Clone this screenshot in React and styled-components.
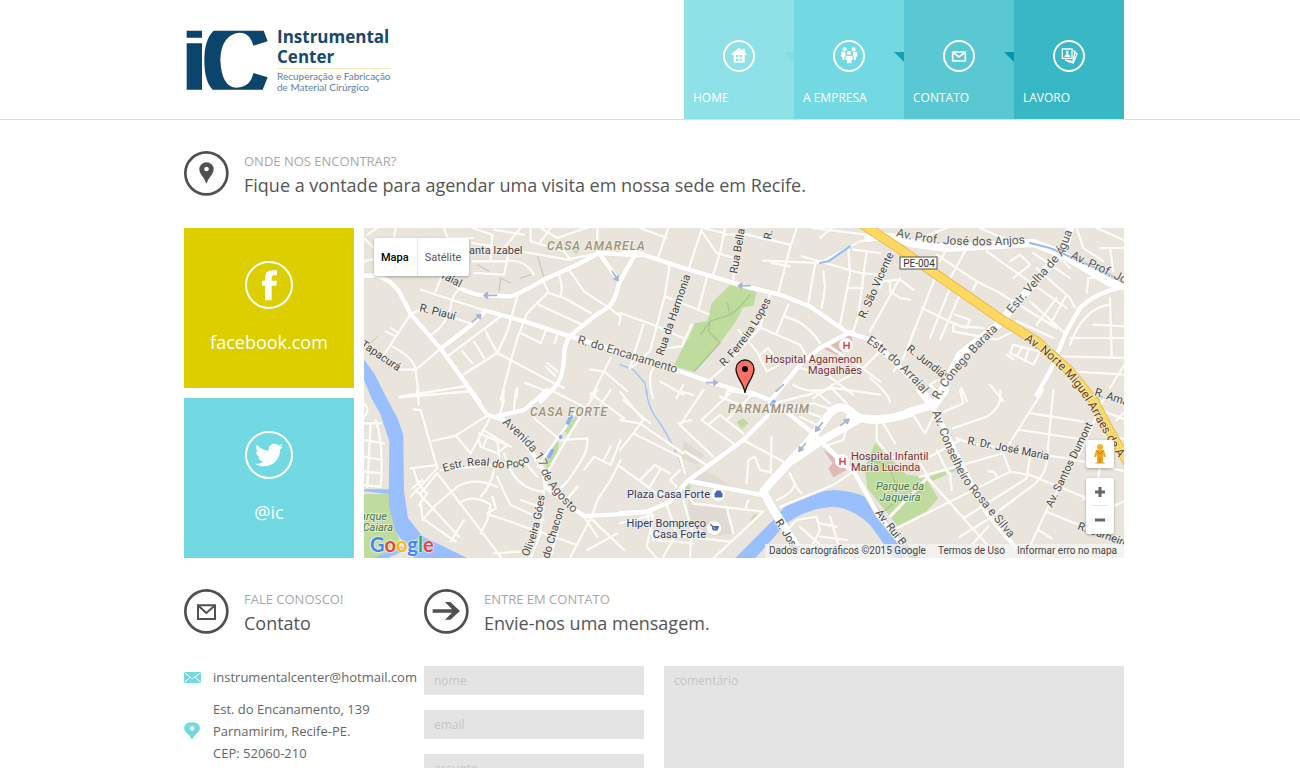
import React from 'react';
import styled, { createGlobalStyle } from 'styled-components';
import { FaTwitter } from 'react-icons/fa';

const GlobalStyle = createGlobalStyle`
  * {
    box-sizing: border-box;
  }
  body {
    margin: 0;
    background: #fff;
    color: #666;
    font-family: "Open Sans", sans-serif;
    font-size: 13px;
  }
  a {
    color: inherit;
    text-decoration: none;
  }
  h2, p {
    margin: 0;
    font-weight: 400;
  }
`;

const navItems = [
  { label: 'HOME', icon: 'home', color: '#8fe1e8', arrow: '#72d9e2' },
  { label: 'A EMPRESA', icon: 'people', color: '#72d9e2', arrow: '#13a1af' },
  { label: 'CONTATO', icon: 'mail', color: '#59c8d2', arrow: '#0796a5' },
  { label: 'LAVORO', icon: 'photos', color: '#38b7c4' },
];

// The map is drawn in six tiles, three units to a pixel.
// x and y are the corner of each tile.
const tiles = [
  {
    x: 0,
    y: 0,
    major: [
      'M-5 143 L40 143 Q80 155 105 190 L140 258 L230 362 L345 520',
      'M250 150 Q300 203 380 203 L440 205 Q470 195 540 155 L640 110 L705 75 L830 82',
      'M705 75 L765 160',
      'M815 75 L765 165 Q755 220 730 240 L690 265 L617 325 Q600 350 600 390 Q598 450 570 480 L530 520',
      'M230 362 L330 285 L365 248 L480 280 L617 325 L780 375 L940 430',
    ],
    minor: [
      'M700 0 V75',
      'M170 185 L365 248',
      'M140 258 L60 380 M65 310 L95 325 M80 300 L100 313',
      'M85 355 Q150 390 155 425 L165 510 M105 425 H155 L230 362',
      'M145 255 L185 240 M270 270 L315 285',
      'M290 180 Q262 200 260 240 Q240 300 200 320 M215 190 L235 140',
      'M110 505 L300 475 M460 205 L430 310 L400 375 L300 438 M410 265 L250 385',
      'M295 370 L325 405 M330 340 L360 390 M365 310 L400 375 L560 460 L600 480',
      'M550 195 L490 255 L460 330 L435 420 L410 515',
      'M525 230 L655 290 M535 155 L555 195 L600 210 L680 255',
      'M585 140 Q598 180 590 205 M615 125 L660 190 L735 240 L770 265 L765 290',
      'M470 315 L530 345 L545 310 M580 320 L572 345 M550 405 L580 430 M545 415 L575 445',
      'M485 465 L560 495 M460 480 L458 510',
      'M680 425 L720 430 L790 490 M740 390 L680 510',
      'M0 30 L30 60 M10 20 L40 0 M95 0 L90 30 M0 100 L40 90',
      'M325 0 L385 20 L380 95 M325 45 L385 55 M435 70 L420 140 L330 135',
      'M325 100 L420 100 Q480 90 510 140 M470 0 L420 60',
      'M500 0 V40 L600 70 L620 95 M380 60 L470 70 L610 95 L705 75',
      'M530 0 L580 30 L680 -5 M530 40 L560 0 M240 0 L250 30 L325 30 M390 5 L480 20',
    ],
  },
  {
    x: 768,
    y: 0,
    major: [
      'M0 62 L55 75 L190 120 L365 172 L480 200 L570 235 L680 312 L780 345',
      'M165 425 L280 465 L400 500',
      'M690 312 L600 360 L540 410 L450 520',
    ],
    minor: [
      'M145 0 L115 85 M140 30 L60 0 M245 5 L205 125 M245 10 L290 75 L345 90',
      'M315 0 L300 75 L280 140 M315 20 H390 M250 0 L310 15 M345 90 L340 155',
      'M150 105 L135 200 L90 370 L40 415 M135 205 L265 258 M260 150 L235 245',
      'M0 255 L100 290 L190 330 M215 290 L185 355 L145 360 M70 290 L30 420',
      'M100 420 Q80 450 100 510 M120 460 L190 500 M190 470 L170 510 M325 480 L315 510',
      'M380 20 L510 50 M530 0 L510 60 L475 195 M430 98 L600 105 L720 40 L780 30',
      'M455 105 L510 115 M545 85 L720 135 L780 140 M585 110 L565 225',
      'M610 130 L615 180 L605 240 M575 0 L780 25 M635 0 L600 30',
      'M685 60 L690 140 L680 190 L660 290 M740 70 L715 260 L700 310 M700 65 L780 75 M685 180 H730',
      'M505 230 L470 315 M490 265 Q560 280 600 345 M450 200 L420 300 L310 420 L270 455',
      'M400 290 L540 350 L560 385 M355 305 L410 370 L440 430 L500 400 M420 380 L445 360 L470 400',
      'M520 470 Q560 500 640 480 L780 500 M580 510 L640 470 L730 420 L780 370',
      'M620 350 L740 430 L780 460 M540 420 L620 440 L700 500',
    ],
  },
  {
    x: 1518,
    y: 0,
    major: [
      'M0 345 L60 390 L170 500',
      'M770 175 Q680 190 630 240 L590 310 L540 430 L500 500',
    ],
    wide: [
      'M-5 30 Q60 15 120 45 L230 60 L490 45 L570 75 L720 165 L770 175',
      'M600 0 L585 60 L410 260 L385 290 L270 380 L235 450 L200 520',
    ],
    minor: [
      'M70 70 L45 130 L30 180 M40 160 L90 155 L130 185 M60 160 V190 L90 210 L120 215',
      'M195 150 L100 390 L70 430 M240 180 L180 330 M0 310 L90 150 M155 240 L270 295 L340 300 M270 200 L210 335',
      'M255 260 L300 275 L290 300 L250 285 V310 L380 335 L430 310',
      'M290 60 L230 170 M200 80 L320 160 L310 185 M350 70 L590 240 M320 160 L400 200 M230 60 L210 100',
      'M500 120 L600 210 L615 240 M440 280 L550 330 M480 220 L590 320 M380 190 L560 300 M590 200 L540 290',
      'M560 210 L500 290 M490 75 L540 110 L600 150 M420 100 L450 80 L480 110 L430 150 M150 30 L230 0 M330 0 L420 40',
      'M560 80 L600 120 M620 0 L640 60 L700 100 M650 195 L655 150 L690 150 M720 60 L730 130 M680 0 L770 40 M690 60 H770',
      'M720 210 L725 385 M670 290 L765 295 M600 350 Q640 240 720 230',
      'M600 330 H770 M570 385 L770 390 M600 430 L770 440 M770 400 L720 480',
      'M430 350 L420 375 L490 410 L510 370 Z M455 360 L440 385 M475 365 L465 400 M410 380 L430 395',
      'M0 450 Q50 490 60 520 M180 470 L205 455 L225 475 L205 495 Z M360 470 L400 520 M275 480 L290 520 M20 340 L80 400',
    ],
  },
  {
    x: 0,
    y: 486,
    major: [
      'M310 -10 L370 75 L420 90 L500 180 L540 245 L545 290 L620 350 L660 378 L780 372 L860 365',
      'M400 78 L480 60 L550 0',
    ],
    minor: [
      'M105 22 L310 5 M160 0 L165 45 M150 58 L170 60 L220 235 L140 320 M205 153 L275 137 L365 80',
      'M275 137 L320 190 M375 90 L320 190 M230 240 L480 215',
      'M345 130 L430 165 L400 190 L350 170 L345 150 M360 165 L370 140 M400 150 L405 200 M360 122 L440 170',
      'M420 30 L405 80 M455 0 L450 60 M420 0 L415 40 M510 85 L590 150 M560 0 L660 50 M680 10 L780 85 M700 60 L740 0',
      'M640 60 L520 230 M700 0 L600 160 L555 240 M590 150 L670 145 Q675 180 640 230 Q600 300 560 310',
      'M770 150 L740 225 L690 200 L660 240 M740 170 L720 210 M770 210 L740 270 L700 330 L685 375',
      'M140 235 L220 225 M150 240 Q160 290 190 310 M145 295 L175 270 M170 310 L215 255',
      'M155 300 L285 440 M220 250 L410 500 M165 345 L190 310 M175 390 L215 345 L280 290 Q330 260 400 290',
      'M285 340 Q330 310 380 345 L370 390 L350 430 M300 390 L260 455 M170 335 L175 385 L275 455',
      'M400 260 Q430 330 440 345 L540 390 M390 240 Q380 290 350 320 M385 320 L395 355 L370 370',
      'M380 375 L640 465 M470 330 L540 355 M420 190 Q450 300 540 305 M480 215 L520 260',
      'M390 490 L470 485 M640 290 L600 340 M680 385 L780 480 M680 385 L620 500 M660 380 L700 440',
      'M590 390 L560 500 M540 300 L530 430 L500 505 M670 480 L760 430',
      'M0 100 H50 M35 90 Q60 160 50 290 M0 150 L60 160 M0 200 L55 210 M0 245 L55 250 M0 285 L45 290 M20 100 L10 290 M0 40 Q20 60 0 80',
    ],
  },
  {
    x: 768,
    y: 486,
    major: [
      'M330 0 L400 10 L460 35 L580 130 L665 215 L705 250 L775 375 L860 480',
      'M460 30 L440 80 L370 150 L200 275 L150 335 L80 365 L0 370',
      'M215 275 L425 315',
    ],
    wide: [
      'M870 70 Q740 110 700 70 Q660 35 630 70 L560 160 L450 280 L430 305 L460 360 L550 500',
      'M720 85 L600 155 L520 210',
    ],
    minor: [
      'M0 5 L70 90 L40 130 M0 90 L60 100 L190 190 M40 130 L180 200 L195 250',
      'M0 180 L40 130 M10 30 L90 100 M0 230 L110 310 L160 320 M60 270 L105 225 L150 250 M90 290 L120 240',
      'M170 290 L150 270 L180 240 M250 0 L180 105 L280 200 M185 5 L220 15 M330 10 L245 90 L340 160',
      'M270 100 L300 75 L370 130 M300 20 L400 60 M390 20 L320 90 M215 90 L175 100 M195 185 L260 225',
      'M370 150 L490 215 M455 140 L452 250 M380 280 L385 210 L405 200 L420 240 L445 245',
      'M510 250 Q530 300 545 310 M470 330 Q520 310 525 280 L510 255 M480 350 L640 285 L700 245',
      'M195 300 L220 340 L430 365 M385 330 L375 360 M460 40 L580 10 M540 60 L600 80 M470 60 L580 40 L640 60',
      'M640 0 L680 40 M600 110 L540 80 M690 80 L670 150 L610 170 M580 0 L630 40',
      'M0 400 L100 375 L80 470 L110 505 M140 345 L170 430 L130 500 M190 330 L215 420 L210 505',
      'M80 365 L100 450 L220 460 M100 430 L330 455 M320 350 L340 430 M425 370 L280 505',
      'M490 430 L530 390 L590 380 L600 420 L560 500 M630 380 L660 480 M540 410 L640 500 M600 400 L650 410 M600 440 L680 450',
    ],
  },
  {
    x: 1518,
    y: 486,
    major: ['M190 50 L230 130 L290 250 L350 370 L460 500'],
    wide: ['M-60 80 Q60 100 120 65 L190 45', 'M150 0 L190 50 L225 0'],
    minor: [
      'M700 30 L640 170 L530 360 L470 490',
      'M20 100 V150 L60 200 L110 210 M40 100 L75 160 M130 75 L165 130 L190 80',
      'M390 0 Q400 50 350 80 L250 115 M270 0 L280 40 L200 75',
      'M520 0 L400 190 L150 260 M550 0 L540 110 L530 220 Q520 270 470 300 L350 390 L270 440',
      'M485 70 L640 95 M450 120 L650 150 M270 150 L180 200 M260 145 L300 160 L530 195 L640 215 L770 245',
      'M200 180 L235 250 M400 190 L420 245 L80 415 M420 245 L480 255 L640 320 L740 345',
      'M480 200 L470 265 L280 385 M165 255 L370 485 M380 260 Q375 240 355 245 M240 250 L245 300',
      'M150 220 L175 260 L60 380 M530 365 L650 415 L770 455 M545 445 L505 420 M355 410 L300 470',
      'M690 230 L680 290 L640 330 M740 90 L770 60 M640 0 L690 60 L770 90 M700 130 L770 150 M730 350 L770 330',
    ],
  },
];

const layer = (kind, width, color) =>
  tiles.map((tile) => (
    <g key={`${kind}${tile.x}-${tile.y}`} transform={`translate(${tile.x} ${tile.y})`}>
      {(tile[kind] || []).map((d) => (
        <path key={d} d={d} stroke={color} strokeWidth={width} />
      ))}
    </g>
  ));

const yellowRoad = 'M1500 -8 L1588 50 L1718 140 L1913 275 L2018 340 L2118 430 L2190 520 L2238 610 L2295 710';

// street names that follow the bend of their street
const curvedNames = [
  { id: 'anjos', d: 'M532 8 Q560 16 600 17 T664 15', text: 'Av. Prof. José dos Anjos' },
  { id: 'agua', d: 'M648 86 L700 26 L712 -6', text: 'Estr. Velha de Água' },
  { id: 'arraial', d: 'M502 114 Q535 136 564 172', text: 'Estr. do Arraial' },
  { id: 'conego', d: 'M575 172 Q588 145 638 98', text: 'R. Cônego Barata' },
  { id: 'norte', d: 'M660 112 Q706 143 728 184 T768 250', text: 'Av. Norte Miguel Arraes de A', tone: 'highway' },
  { id: 'rosa', d: 'M568 184 Q590 245 606 263 T656 324', text: 'Av. Conselheiro Rosa e Silva' },
  { id: 'agosto', d: 'M138 195 Q174 226 177 242 T216 292', text: 'Avenida 17 de Agosto' },
  { id: 'poco', d: 'M80 244 Q110 234 130 239 T166 233', text: 'Estr. Real do Poço', tone: 'dark' },
  { id: 'ferreira', d: 'M360 139 Q388 112 408 70', text: 'R. Ferreira Lopes', tone: 'dark' },
  { id: 'goes', d: 'M164 329 Q178 300 181 262', text: 'Oliveira Góes', tone: 'dark' },
];

const straightNames = [
  { x: 105, y: 26, turn: 0, text: 'anta Izabel' },
  { x: 77, y: 50, turn: 27, text: 'raial' },
  { x: 55, y: 83, turn: 14, text: 'R. Piauí' },
  { x: -4, y: 118, turn: 34, text: 'Tapacurá' },
  { x: 213, y: 115, turn: 17, text: 'R. do Encanamento', large: true },
  { x: 299, y: 128, turn: -71, text: 'Rua da Harmonia' },
  { x: 373, y: 46, turn: -80, text: 'Rua Bella' },
  { x: 407, y: 12, turn: -80, text: 'R.' },
  { x: 501, y: 91, turn: -66, text: 'R. São Vicente' },
  { x: 706, y: 30, turn: 25, text: 'Av. Prof. José', large: true },
  { x: 542, y: 122, turn: 38, text: 'R. Jundiá' },
  { x: 730, y: 167, turn: 18, text: 'R. Amaral' },
  { x: 603, y: 216, turn: 11, text: 'R. Dr. José Maria' },
  { x: 688, y: 280, turn: -64, text: 'Av. Santos Dumont' },
  { x: 713, y: 301, turn: 20, text: 'R. Carneiro' },
  { x: 511, y: 285, turn: 52, text: 'Av. Rui Barbosa' },
  { x: 411, y: 294, turn: 58, text: 'R. José' },
  { x: 185, y: 331, turn: -73, text: 'do Chacon' },
];

const placeNames = [
  { x: 183, y: 22, tone: 'district', text: 'CASA AMARELA' },
  { x: 166, y: 188, tone: 'district', text: 'CASA FORTE' },
  { x: 364, y: 185, tone: 'district', text: 'PARNAMIRIM' },
  { x: 498, y: 135, tone: 'hospital', anchor: 'end', text: 'Hospital Agamenon' },
  { x: 498, y: 146, tone: 'hospital', anchor: 'end', text: 'Magalhães' },
  { x: 487, y: 232, tone: 'hospital', text: 'Hospital Infantil' },
  { x: 487, y: 243, tone: 'hospital', text: 'Maria Lucinda' },
  { x: 536, y: 262, tone: 'park', anchor: 'middle', text: 'Parque da' },
  { x: 536, y: 273, tone: 'park', anchor: 'middle', text: 'Jaqueira' },
  { x: 23, y: 292, tone: 'park', anchor: 'end', text: 'Parque' },
  { x: 29, y: 303, tone: 'park', anchor: 'end', text: 'Caiara' },
  { x: 346, y: 270, tone: 'shop', anchor: 'end', text: 'Plaza Casa Forte' },
  { x: 342, y: 299, tone: 'shop', anchor: 'end', text: 'Hiper Bompreço' },
  { x: 342, y: 310, tone: 'shop', anchor: 'end', text: 'Casa Forte' },
];

const tones = {
  street: '#5a5a5a',
  dark: '#444',
  highway: '#6f4412',
  district: '#9c9279',
  hospital: '#7c3038',
  park: '#3d7b3a',
  shop: '#333a66',
};

function NavIcon({ name, color }) {
  return (
    <svg width="32" height="32" viewBox="0 0 96 96" fill="none" aria-hidden="true">
      <circle cx="48" cy="48" r="45" stroke="#fff" strokeWidth="6" />
      {name === 'home' &&
        <g>
          <path d="M48 23 L59 32 V26 H65 V37 L73 44 H65 V68 H32 V44 H23 Z" fill="#fff" />
          <path d="M39 45 h7 v7 h-7z M50 45 h7 v7 h-7z M39 56 h7 v7 h-7z M50 56 h7 v7 h-7z" fill={color} />
        </g>
      }
      {name === 'people' &&
        <g fill="#fff">
          <circle cx="35" cy="28" r="6" />
          <circle cx="62" cy="28" r="6" />
          <path d="M24 39 Q24 35 28 35 H37 V59 H28 V50 H24Z M73 39 Q73 35 69 35 H60 V59 H69 V50 H73Z" />
          <circle cx="48" cy="39" r="8" stroke={color} strokeWidth="3" />
          <path d="M36 51 Q36 46 41 46 H56 Q61 46 61 51 V61 H57 V71 H40 V61 H36Z" stroke={color} strokeWidth="3" />
        </g>
      }
      {name === 'mail' &&
        <path d="M29 36 H67 V63 H29 Z M31 38 L48 51 L65 38" stroke="#fff" strokeWidth="5" />
      }
      {name === 'photos' &&
        <g stroke="#fff" strokeWidth="3">
          <path d="M61 32 L66 34 L60 65 L36 60" strokeWidth="4" />
          <path d="M67 38 L72 41 L61 69 L43 64" strokeWidth="4" />
          <path d="M28 27 H57 V55 H28 Z" fill={color} strokeWidth="4" />
          <circle cx="43" cy="36" r="4" fill="#fff" stroke="none" />
          <path d="M34 51 Q35 44 40 44 L39 40 H47 L46 44 Q51 44 52 51Z" fill="#fff" stroke="none" />
        </g>
      }
    </svg>
  );
}

function HeadingIcon({ name }) {
  return (
    <svg width="45" height="45" viewBox="0 0 135 135" fill="none" aria-hidden="true">
      <circle cx="67" cy="67" r="63" stroke="#505050" strokeWidth="8" />
      {name === 'pin' &&
        <path fillRule="evenodd" fill="#505050" d="M67 98 Q61 82 51 70 Q46 63 46 55 A21 21 0 0 1 89 55 Q89 63 84 70 Q74 82 67 98Z M67 47 a7 7 0 1 0 1 0Z" />
      }
      {name === 'mail' &&
        <path d="M42 49 H93 V90 H42 Z M44 51 L67 72 L91 51" stroke="#505050" strokeWidth="6" />
      }
      {name === 'arrow' &&
        <path d="M63 39 H79 L108 66 L79 92 H63 L84 71 H26 V61 H84 Z" fill="#505050" />
      }
    </svg>
  );
}

function Heading({ icon, small, title }) {
  return (
    <HeadingRow>
      <HeadingIcon name={icon} />
      <div>
        <Kicker>{small}</Kicker>
        <Title>{title}</Title>
      </div>
    </HeadingRow>
  );
}

function StreetMap() {
  return (
    <MapDrawing viewBox="0 0 760 330" preserveAspectRatio="xMidYMid slice" role="img" aria-label="Mapa de Parnamirim, Recife">
      <rect width="760" height="330" fill="#e9e5dc" />
      <g transform="scale(0.33333)" fill="none" strokeLinecap="round" strokeLinejoin="round">
        <g fill="#dfdad2">
          <path d="M973 816 L1098 846 L1108 916 L1048 926 L973 880Z M1000 716 L1060 746 L1120 790 L990 756Z" />
          <path d="M960 640 L1020 680 L1000 710 L950 690Z" />
        </g>
        <g fill="#bfdc9e">
          <path d="M1098 170 L1178 190 L1168 235 L1138 238 L1113 285 L1068 345 L993 432 L928 415 L983 310 L993 285 L1030 280 L1043 225Z" />
          <path d="M0 798 H75 L90 886 L110 946 L40 990 H0Z" />
          <path d="M1533 645 L1628 740 L1683 746 L1723 811 L1678 861 L1603 896 L1570 856 L1510 780 L1502 720Z" />
          <path d="M1693 748 L1783 711 L1793 721 L1703 760Z M2178 496 L2208 506 L2198 531Z" />
          <path d="M1118 581 L1138 571 L1153 586 L1133 604Z M1168 861 L1193 858 L1173 884 L1158 881Z M960 775 L980 770 L975 810Z" />
          <path d="M595 600 L618 560 L640 568 L612 622Z M540 710 L556 660 L585 640 L578 690 L552 722Z M625 70 L645 62 L640 78Z" />
        </g>
        <path d="M1378 345 L1458 308 L1466 340 L1420 382 L1378 362Z M1378 666 L1418 691 L1448 726 L1408 748 L1393 721 L1406 706Z" fill="#e2b8b4" />
        <path d="M0 395 L30 435 L68 510 L100 570 L118 620 L120 790 L132 870 L175 925 L310 990 H150 L95 910 L74 830 L76 640 L50 560 L22 510 L0 455Z" fill="#99bfff" />
        <path d="M0 784 L75 784 L75 798 L0 790Z M30 990 L110 955 L130 965 L70 990Z" fill="#99bfff" />
        <path d="M1113 991 L1228 876 L1268 831 Q1338 790 1408 786 Q1488 790 1530 822 L1560 865 L1600 925 L1625 991 H1590 L1558 946 L1518 890 Q1460 838 1408 836 Q1328 841 1268 886 L1173 991Z" fill="#99bfff" />
        <g stroke="#9dc1fb" strokeWidth="4">
          <path d="M848 486 Q848 536 888 586 Q928 646 960 730 M768 410 L808 425 L843 465 L848 500" />
        </g>
        <g stroke="#a9c68c" strokeWidth="4">
          <path d="M1158 200 Q1120 250 1098 260 L1038 280 L1033 310 L1068 345 L990 430 M1090 225 L1098 260 M1038 280 L1010 320" />
          <path d="M1520 700 Q1580 700 1590 760 Q1640 780 1670 820 M1560 850 Q1600 810 1670 790" />
        </g>
        <g stroke="#c3bfb6" strokeWidth="3">
          <path d="M405 190 L410 150 L440 165 M470 150 L500 140 M520 80 L540 150 M340 110 L375 130 M15 350 L40 325" />
        </g>
        {layer('minor', 11, '#e1ddd3')}
        {layer('major', 17, '#dfdbd1')}
        {layer('wide', 28, '#dfdbd1')}
        {layer('minor', 8, '#fbfaf7')}
        {layer('major', 14, '#fff')}
        {layer('wide', 25, '#fff')}
        <path d={yellowRoad} stroke="#e9bd4e" strokeWidth="30" />
        <path d={yellowRoad} stroke="#ffd95f" strokeWidth="24" />
        <path d="M1998 45 L2058 60 L2218 130 L2288 168 M1368 105 L1393 100 L1458 55" stroke="#94bafa" strokeWidth="6" />
        <path d="M612 585 L622 566 M555 686 L565 668 M590 626 V628 M1223 530 L1230 520" stroke="#86b0f5" strokeWidth="11" />
        <g stroke="#a9b3d3" strokeWidth="5">
          <path d="M360 202 H398 M360 202 L370 194 V210Z M325 282 L350 260 M350 260 L338 262 L349 272Z" />
          <path d="M745 130 L762 158 M762 158 L750 152 L762 144Z M1123 173 H1158 M1123 173 L1133 166 V180Z" />
          <path d="M1028 464 H1060 M1060 464 L1050 457 V471Z M1236 490 L1258 470 M1355 610 L1375 584 M1355 610 L1356 596 L1368 604Z" />
          <path d="M1305 670 L1325 646 M1305 670 L1306 656 L1318 664Z M1430 592 L1455 574 M1455 574 L1441 576 L1450 586Z" />
        </g>
      </g>
      <rect x="536" y="29" width="37" height="12" fill="#fff" stroke="#555" />
      <Badge x="555" y="39" textAnchor="middle">PE-004</Badge>
      {curvedNames.map(({ id, d, text, tone }) =>
        <g key={id}>
          <path id={id} d={d} fill="none" />
          <Label $tone={tone || 'street'} $large={!tone}>
            <textPath href={`#${id}`}>{text}</textPath>
          </Label>
        </g>
      )}
      {straightNames.map(({ x, y, turn, text, large }) =>
        <Label key={text} $tone={large ? 'street' : 'dark'} $large={large} transform={`translate(${x} ${y}) rotate(${turn})`}>{text}</Label>
      )}
      {placeNames.map(({ x, y, tone, anchor, text }) =>
        <Label key={text} x={x} y={y} $tone={tone} textAnchor={anchor}>{text}</Label>
      )}
      <g fill="#fff">
        <circle cx="482" cy="117" r="7" />
        <circle cx="478" cy="233" r="7" />
        <circle cx="354" cy="266" r="7" />
        <circle cx="350" cy="300" r="7" />
      </g>
      <path d="M480 114 v7 M485 114 v7 M480 117.500 h5 M476 230 v7 M481 230 v7 M476 233.500 h5" stroke="#e23a35" strokeWidth="1.400" />
      <path d="M351 265 h7 v4 h-7z M352.500 265 v-2 h4 v2" fill="#4a66bb" stroke="#4a66bb" />
      <path d="M346 297 h2 l1 5 h5 M348.500 298.500 h6 l-1 2.500 h-4z" fill="#4a66bb" stroke="#4a66bb" />
      <path d="M381 165 C380 155 372 150 372 141 A9 9 0 0 1 390 141 C390 150 382 155 381 165Z" fill="#fc6f63" stroke="#111" strokeWidth="1.300" />
      <circle cx="381" cy="141" r="3" fill="#000" />
    </MapDrawing>
  );
}

function App() {
  return (
    <div>
      <GlobalStyle />
      <Header>
        <HeaderInner>
          <Logo href="#">
            <svg width="84" height="62" viewBox="20 30 252 186" aria-hidden="true">
              <path d="M22 32 H68 V53 H22Z M22 70 H68 V209 H22Z" fill="#0c456b" />
              <path d="M103 32 H253 L265 64 L222 77 Q212 38 180 38 Q126 44 123 118 Q126 203 172 203 Q214 201 222 159 L265 172 L250 209 H100 Q75 185 75 120 Q75 58 103 32Z" fill="#0c456b" />
            </svg>
            <LogoText>
              <LogoName>Instrumental<br />Center</LogoName>
              <LogoSub>Recuperação e Fabricação<br />de Material Cirúrgico</LogoSub>
            </LogoText>
          </Logo>
          <Nav>
            {navItems.map(({ label, icon, color, arrow }) =>
              <NavLink key={label} href="#" $color={color} $arrow={arrow}>
                <NavIcon name={icon} color={color} />
                <span>{label}</span>
              </NavLink>
            )}
          </Nav>
        </HeaderInner>
      </Header>

      <Page>
        <Heading icon="pin" small="ONDE NOS ENCONTRAR?" title="Fique a vontade para agendar uma visita em nossa sede em Recife." />
        <MapRow>
          <Social>
            <SocialLink href="#" $color="#ddce00">
              <svg width="48" height="48" viewBox="0 0 144 144" fill="none" aria-hidden="true">
                <circle cx="72" cy="72" r="69" stroke="#fff" strokeWidth="6" />
                <path d="M96 28 V43 H86 Q80 43 80 50 V59 H96 L94 74 H80 V118 H60 V74 H51 V59 H60 V50 Q60 28 82 28Z" fill="#fff" />
              </svg>
              <span>facebook.com</span>
            </SocialLink>
            <SocialLink href="#" $color="#72d9e2">
              <Ring><FaTwitter size={28} /></Ring>
              <span>@ic</span>
            </SocialLink>
          </Social>
          <MapBox>
            <StreetMap />
            <MapTypes>
              <MapType type="button" $active>Mapa</MapType>
              <MapType type="button">Satélite</MapType>
            </MapTypes>
            <MapTools>
              <ToolBox>
                <ToolButton type="button" aria-label="Street View">
                  <svg width="14" height="22" viewBox="0 0 14 22" aria-hidden="true">
                    <ellipse cx="7" cy="20" rx="5" ry="1" fill="#ccc" />
                    <path d="M3 7 H11 L13 14 L11 14 L10 11 V20 H4 V11 L3 14 L1 14Z" fill="#f3a71c" />
                    <path d="M4 8 L7 11 L10 8 M7 14 V20" fill="none" stroke="#c9701b" />
                    <circle cx="7" cy="4" r="3" fill="#f7b22c" />
                  </svg>
                </ToolButton>
              </ToolBox>
              <ToolBox>
                <ToolButton type="button" aria-label="Aumentar o zoom">
                  <svg width="12" height="12" aria-hidden="true"><path d="M1 6 H11 M6 1 V11" stroke="#666" strokeWidth="3" /></svg>
                </ToolButton>
                <ToolLine />
                <ToolButton type="button" aria-label="Diminuir o zoom">
                  <svg width="12" height="12" aria-hidden="true"><path d="M1 6 H11" stroke="#666" strokeWidth="3" /></svg>
                </ToolButton>
              </ToolBox>
            </MapTools>
            <GoogleLogo href="#">
              <Letter $color="#4285f4">G</Letter>
              <Letter $color="#ea4335">o</Letter>
              <Letter $color="#fbbc05">o</Letter>
              <Letter $color="#4285f4">g</Letter>
              <Letter $color="#34a853">l</Letter>
              <Letter $color="#ea4335">e</Letter>
            </GoogleLogo>
            <Credits>
              <span>Dados cartográficos ©2015 Google</span>
              <a href="#">Termos de Uso</a>
              <a href="#">Informar erro no mapa</a>
            </Credits>
          </MapBox>
        </MapRow>

        <ContactRow>
          <div>
            <Heading icon="mail" small="FALE CONOSCO!" title="Contato" />
            <Address>
              <svg width="17" height="11" viewBox="0 0 51 33" aria-hidden="true">
                <rect width="51" height="33" rx="4" fill="#72d9e2" />
                <path d="M2 3 L25 20 L49 3 M2 30 L18 16 M49 30 L33 16" fill="none" stroke="#fff" strokeWidth="3" />
              </svg>
              <a href="mailto:instrumentalcenter@hotmail.com">instrumentalcenter@hotmail.com</a>
              <svg width="16" height="18" viewBox="0 0 48 54" aria-hidden="true">
                <path fillRule="evenodd" d="M24 53 Q18 42 6 31 Q0 25 0 18 Q2 1 24 1 Q46 1 48 18 Q48 25 42 31 Q30 42 24 53Z M24 12 a7 7 0 1 0 1 0Z" fill="#72d9e2" />
              </svg>
              <p>Est. do Encanamento, 139<br />Parnamirim, Recife-PE.<br />CEP: 52060-210</p>
            </Address>
          </div>
          <div>
            <Heading icon="arrow" small="ENTRE EM CONTATO" title="Envie-nos uma mensagem." />
            <Form>
              <Fields>
                <Input type="text" placeholder="nome" aria-label="nome" />
                <Input type="email" placeholder="email" aria-label="email" />
                <Input type="text" placeholder="assunto" aria-label="assunto" />
              </Fields>
              <Comment placeholder="comentário" aria-label="comentário" />
            </Form>
          </div>
        </ContactRow>
      </Page>
    </div>
  );
}

const Header = styled.header`
  border-bottom: 1px solid #ddd;
`;

const HeaderInner = styled.div`
  display: flex;
  justify-content: space-between;
  max-width: 948px;
  margin: 0 auto;
  padding-left: 8px;
`;

const Logo = styled.a`
  display: flex;
  align-items: flex-start;
  gap: 7px;
  padding: 30px 0 0 2px;
  color: #17486f;
`;

const LogoText = styled.span`
  display: flex;
  flex-direction: column;
  margin-top: -3px;
`;

const LogoName = styled.strong`
  padding-bottom: 1px;
  border-bottom: 1px solid #f9e8b4;
  font-size: 17px;
  font-weight: 700;
  line-height: 20px;
`;

const LogoSub = styled.span`
  padding-top: 2px;
  color: #5b82a3;
  font-family: Lato, sans-serif;
  font-size: 10px;
  line-height: 11px;
`;

const Nav = styled.nav`
  display: grid;
  grid-template-columns: repeat(4, 110px);
`;

const NavLink = styled.a`
  display: flex;
  flex-direction: column;
  gap: 17px;
  position: relative;
  height: 119px;
  padding: 40px 9px 0;
  background: ${({ $color }) => $color};
  color: #fff;
  font-size: 12px;
  font-weight: 500;
  line-height: 17px;
  svg {
    align-self: center;
  }
  &::after {
    content: "";
    display: ${({ $arrow }) => ($arrow ? 'block' : 'none')};
    position: absolute;
    top: 52px;
    right: 0;
    border-top: 10px solid ${({ $arrow, $color }) => ($color === '#8fe1e8' ? '#7fdde5' : $arrow)};
    border-left: 10px solid transparent;
  }
`;

const Page = styled.main`
  max-width: 948px;
  margin: 0 auto;
  padding: 31px 0 40px 8px;
`;

const HeadingRow = styled.div`
  display: flex;
  gap: 15px;
  margin-bottom: 32px;
  svg {
    flex: none;
  }
`;

const Kicker = styled.p`
  color: #a8a8a8;
  font-size: 13px;
  line-height: 21px;
`;

const Title = styled.h2`
  color: #555;
  font-size: 18px;
  line-height: 26px;
  margin-bottom: -2px;
`;

const MapRow = styled.div`
  display: grid;
  grid-template-columns: 170px 1fr;
  gap: 10px;
  margin-bottom: 31px;
`;

const Social = styled.div`
  display: grid;
  gap: 10px;
`;

const SocialLink = styled.a`
  display: flex;
  flex-direction: column;
  align-items: center;
  gap: 20px;
  height: 160px;
  padding-top: 33px;
  background: ${({ $color }) => $color};
  color: #fff;
  font-size: 18px;
  font-weight: 500;
  line-height: 26px;
`;

const Ring = styled.span`
  display: grid;
  place-items: center;
  width: 48px;
  height: 48px;
  border: 2px solid #fff;
  border-radius: 50%;
`;

const MapBox = styled.div`
  position: relative;
  height: 330px;
  overflow: hidden;
  background: #e9e5dc;
  font-family: Roboto, sans-serif;
`;

const MapDrawing = styled.svg`
  display: block;
  width: 100%;
  height: 100%;
`;

const Label = styled.text`
  fill: ${({ $tone }) => tones[$tone]};
  stroke: #f4f1eb;
  stroke-width: 2px;
  stroke-opacity: 0.7;
  paint-order: stroke;
  font-size: ${({ $large, $tone }) => ($large || $tone === 'highway' || $tone === 'district' ? 12 : 11)}px;
  font-style: ${({ $tone }) => ($tone === 'district' || $tone === 'park' ? 'italic' : 'normal')};
  font-weight: ${({ $tone }) => ($tone === 'district' ? 500 : 400)};
  letter-spacing: ${({ $tone }) => ($tone === 'district' ? '1px' : 'normal')};
`;

const Badge = styled.text`
  fill: #333;
  font-size: 10px;
`;

const MapTypes = styled.div`
  display: flex;
  position: absolute;
  top: 10px;
  left: 10px;
  background: #fff;
  border-radius: 2px;
  box-shadow: 0 1px 3px rgba(0, 0, 0, 0.3);
`;

const MapType = styled.button`
  height: 38px;
  padding: 0 8px 0 7px;
  border: 0;
  border-left: ${({ $active }) => ($active ? '0' : '1px solid #e6e6e6')};
  background: none;
  color: ${({ $active }) => ($active ? '#000' : '#565656')};
  font-family: inherit;
  font-size: 11px;
  font-weight: ${({ $active }) => ($active ? 500 : 400)};
`;

const MapTools = styled.div`
  display: grid;
  gap: 10px;
  position: absolute;
  right: 10px;
  bottom: 24px;
`;

const ToolBox = styled.div`
  width: 28px;
  background: #fff;
  border-radius: 2px;
  box-shadow: 0 1px 3px rgba(0, 0, 0, 0.3);
`;

const ToolButton = styled.button`
  display: grid;
  place-items: center;
  width: 28px;
  height: 28px;
  padding: 0;
  border: 0;
  background: none;
`;

const ToolLine = styled.div`
  height: 1px;
  margin: -1px 5px 0;
  background: #e6e6e6;
`;

const GoogleLogo = styled.a`
  position: absolute;
  left: 6px;
  bottom: 1px;
  font-family: Lato, sans-serif;
  font-size: 20px;
  font-weight: 700;
  line-height: 26px;
  text-shadow: 0 0 2px #fff, 0 0 2px #fff;
`;

const Letter = styled.span`
  color: ${({ $color }) => $color};
`;

const Credits = styled.div`
  display: flex;
  gap: 12px;
  position: absolute;
  right: 0;
  bottom: 0;
  padding: 0 7px 0 4px;
  background: rgba(245, 245, 245, 0.75);
  color: #444;
  font-size: 10px;
  line-height: 14px;
`;

const ContactRow = styled.div`
  display: grid;
  grid-template-columns: 240px 1fr;
`;

const Address = styled.div`
  display: grid;
  grid-template-columns: 17px 1fr;
  align-items: center;
  gap: 10px 12px;
  line-height: 22px;
`;

const Form = styled.form`
  display: grid;
  grid-template-columns: 220px 1fr;
  gap: 20px;
`;

const Fields = styled.div`
  display: grid;
  gap: 15px;
`;

const Input = styled.input`
  width: 100%;
  height: 29px;
  padding: 0 10px;
  border: 0;
  background: #e4e4e4;
  color: #666;
  font-family: inherit;
  font-size: 12px;
  &::placeholder {
    color: #c4c4c4;
  }
`;

const Comment = styled(Input).attrs({ as: 'textarea' })`
  height: 117px;
  padding: 6px 10px;
  resize: none;
`;

export default App;
